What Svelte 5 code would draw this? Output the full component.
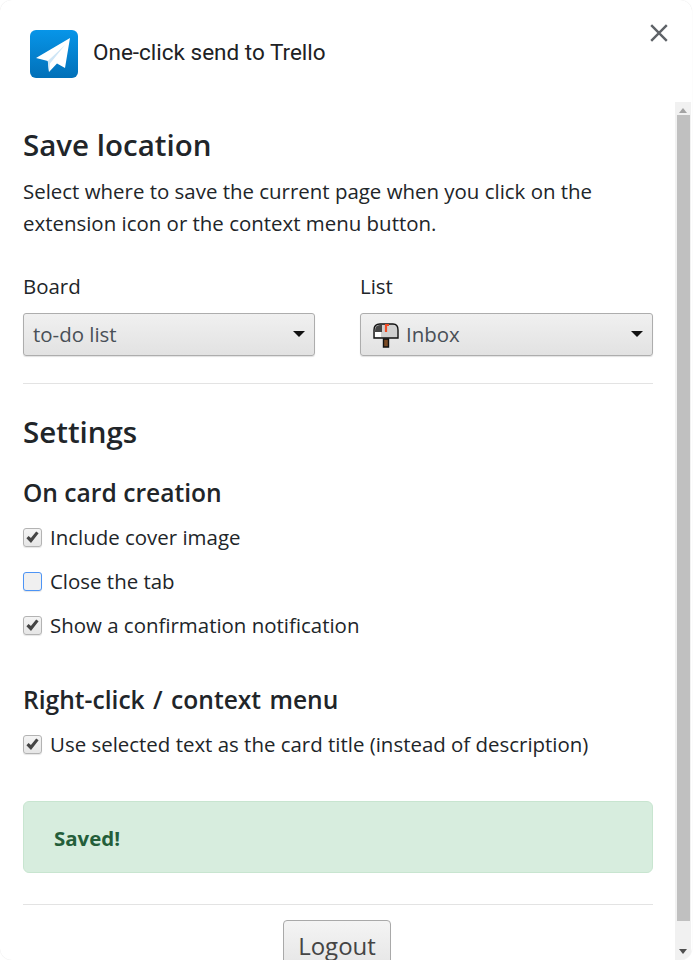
<script>
  let options = $state([
    { id: "cover", label: "Include cover image", checked: true },
    { id: "close", label: "Close the tab", checked: false, focused: true },
    { id: "notify", label: "Show a confirmation notification", checked: true },
  ])
  let titleOption = $state({ label: "Use selected text as the card title (instead of description)", checked: true })
</script>

{#snippet check(item)}
  <label class="check">
    <span class="box" class:focused={item.focused}>
      {#if item.checked}
        <svg viewBox="0 0 19 19" width="19" height="19"><path d="M3.4 10.2 L5.6 7.9 L7.9 10.1 L13.2 3.4 L15.6 5.2 L8 15 Z" fill="#444" /></svg>
      {/if}
    </span>
    <span>{item.label}</span>
  </label>
{/snippet}

<div class="dialog">
  <header>
    <svg class="logo" viewBox="0 0 48 48" width="48" height="48">
      <defs>
        <linearGradient id="sky" x1="0" y1="0" x2="0" y2="1">
          <stop offset="0" stop-color="#0795e8" />
          <stop offset="1" stop-color="#0270b8" />
        </linearGradient>
      </defs>
      <rect width="48" height="48" rx="6" fill="url(#sky)" />
      <path d="M40 8 L35 38 L27 33.5 L19 42 L17.8 31 L6 28 Z" fill="#fff" />
      <path d="M35 15 L17.8 31 L19 42 L20 33.5 Z" fill="#cfe6f6" />
    </svg>
    <span class="title">One-click send to Trello</span>
    <button class="close" aria-label="Close">
      <svg viewBox="0 0 18 18" width="18" height="18"><path d="M1.2 1.2 L16.8 16.8 M16.8 1.2 L1.2 16.8" stroke="#5f6368" stroke-width="2.4" fill="none" /></svg>
    </button>
  </header>

  <div class="body">
    <main>
      <h2>Save location</h2>
      <p>Select where to save the current page when you click on the extension icon or the context menu button.</p>

      <div class="fields">
        <div class="field">
          <span class="label">Board</span>
          <div class="select">
            <span>to-do list</span>
            <i class="caret"></i>
          </div>
        </div>
        <div class="field">
          <span class="label">List</span>
          <div class="select">
            <svg class="mailbox" viewBox="0 0 26 26" width="26" height="26">
              <path d="M10.5 17 H15.5 V25 H10.5 Z" fill="#7a4a24" stroke="#111" stroke-width="1.4" />
              <path d="M1 16 V8 Q1 2 7 2 H20 Q25 2 25 8 V16 Z" fill="#cfcfcf" stroke="#111" stroke-width="1.4" />
              <path d="M2 9 Q2 3 7 3 H9 V10 H2 Z" fill="#444" />
              <path d="M2 10 H8 V15 H2 Z" fill="#fff" />
              <path d="M13 10 V3 H16" fill="none" stroke="#f04a24" stroke-width="2.2" />
            </svg>
            <span>Inbox</span>
            <i class="caret"></i>
          </div>
        </div>
      </div>

      <hr class="first" />

      <h2 class="settings">Settings</h2>
      <h3>On card creation</h3>
      <div class="checks">
        {#each options as item (item.id)}
          {@render check(item)}
        {/each}
      </div>

      <h3 class="context">Right-click / context menu</h3>
      {@render check(titleOption)}

      <div class="alert">Saved!</div>

      <hr class="last" />

      <div class="actions">
        <button class="logout">Logout</button>
      </div>
    </main>

    <div class="scrollbar">
      <span class="arrow up"></span>
      <div class="thumb"></div>
      <span class="arrow down"></span>
    </div>
  </div>
</div>

<style>
  :global(html), :global(body) {
    margin: 0;
    height: 100%;
    overflow: hidden;
    background: #fff;
  }
  .dialog {
    width: 692px;
    height: 960px;
    box-sizing: border-box;
    background: #fff;
    border-radius: 12px;
    box-shadow: 0 0 1px #ddd;
    display: flex;
    flex-direction: column;
    overflow: hidden;
    font-family: "Open Sans", "Noto Sans", sans-serif;
    color: #212529;
  }
  header {
    height: 102px;
    flex: none;
    display: flex;
    align-items: flex-start;
    padding: 30px 0 0 30px;
    box-sizing: border-box;
    position: relative;
  }
  .title {
    margin: 9px 0 0 15px;
    font-family: Roboto, sans-serif;
    font-size: 22.5px;
    line-height: 26px;
    color: #202124;
  }
  .close {
    position: absolute;
    top: 24px;
    right: 24px;
    padding: 0;
    border: 0;
    background: none;
    display: flex;
  }
  .body {
    flex: 1;
    min-height: 0;
    display: flex;
    padding-left: 23px;
    overflow: hidden;
  }
  main {
    width: 630px;
    flex: none;
    font-size: 20.45px;
    line-height: 32px;
  }
  h2 {
    margin: 24px 0 0;
    font-size: 29.5px;
    line-height: 38px;
    font-weight: 600;
  }
  h3 {
    margin: 0;
    font-size: 24.6px;
    line-height: 30px;
    font-weight: 600;
  }
  p {
    margin: 11px 0 0;
  }
  .fields {
    display: grid;
    grid-template-columns: 292px 293px;
    column-gap: 45px;
    margin-top: 32px;
  }
  .label {
    display: block;
    line-height: 30px;
  }
  .select {
    margin-top: 12px;
    height: 43px;
    box-sizing: border-box;
    border: 1px solid #adadad;
    border-radius: 3px;
    background: linear-gradient(#f0f0f0, #e2e2e2);
    box-shadow: 0 1px 1px rgba(0, 0, 0, 0.12);
    display: flex;
    align-items: center;
    gap: 7px;
    padding: 0 9px 2px;
    color: #495057;
    position: relative;
  }
  .mailbox {
    margin: 2px 0 0 3px;
    flex: none;
  }
  .caret {
    position: absolute;
    right: 9px;
    top: 17px;
    border-style: solid;
    border-width: 6px 6px 0;
    border-color: #111 transparent transparent;
  }
  hr {
    margin: 0;
    border: 0;
    border-top: 1px solid #e3e3e3;
  }
  hr.first {
    margin-top: 27px;
  }
  .settings {
    margin-top: 29px;
  }
  .settings + h3 {
    margin-top: 27px;
  }
  .checks {
    display: flex;
    flex-direction: column;
    gap: 12px;
    margin-top: 13px;
  }
  .check {
    display: flex;
    align-items: center;
    gap: 8px;
    line-height: 32px;
  }
  .box {
    width: 19px;
    height: 19px;
    flex: none;
    box-sizing: border-box;
    border: 1px solid #b3b3b3;
    border-radius: 3px;
    background: linear-gradient(#f4f4f4, #e6e6e6);
    box-shadow: 0 1px 1px rgba(0, 0, 0, 0.1);
    display: flex;
    align-items: center;
    justify-content: center;
  }
  .box svg {
    flex: none;
  }
  .box.focused {
    border-color: #4d94f5;
    background: #f0f0f0;
  }
  .context {
    margin-top: 44px;
    margin-bottom: 13px;
    word-spacing: 2px;
  }
  .alert {
    margin-top: 41px;
    height: 72px;
    box-sizing: border-box;
    padding: 20px 30px;
    background: #d7edde;
    border: 1px solid #c8e5d0;
    border-radius: 6px;
    color: #245e3a;
    font-weight: 700;
  }
  hr.last {
    margin-top: 31px;
  }
  .actions {
    display: flex;
    justify-content: center;
    padding-right: 2px;
    margin-top: 15px;
  }
  .logout {
    width: 108px;
    height: 54px;
    padding: 6px 0 8px;
    box-sizing: border-box;
    border: 1px solid #a9a9a9;
    border-radius: 4px;
    background: linear-gradient(#f4f4f4, #e4e4e4);
    font: inherit;
    font-size: 24px;
    color: #444;
  }
  .scrollbar {
    position: relative;
    width: 16px;
    margin-left: 22px;
    flex: none;
    background: #f1f1f1;
    display: flex;
    flex-direction: column;
    align-items: center;
  }
  .thumb {
    flex: 1;
    width: 13px;
    margin: 13px 0 39px;
    background: #c0c0c0;
  }
  .arrow {
    position: absolute;
    left: 4px;
    border-style: solid;
    border-color: transparent;
  }
  .up {
    top: 6px;
    border-width: 0 4px 5px;
    border-bottom-color: #a3a3a3;
  }
  .down {
    bottom: 6px;
    border-width: 5px 4px 0;
    border-top-color: #505050;
  }
</style>
